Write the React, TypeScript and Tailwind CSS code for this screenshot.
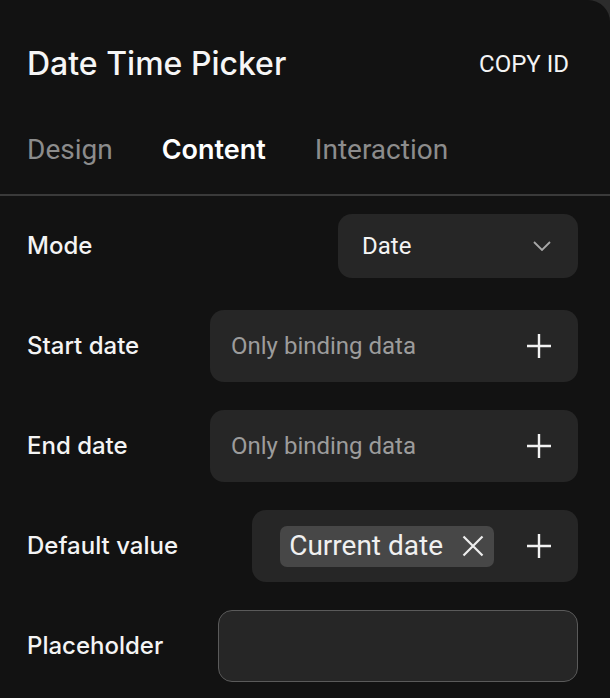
import { ReactNode } from "react";

function Plus() {
  return (
    <svg width="26" height="26" viewBox="0 0 26 26" className="shrink-0">
      <path d="M13 1v24M1 13h24" stroke="#f2f2f2" strokeWidth="2.4" strokeLinecap="butt" />
    </svg>
  );
}

function Cross() {
  return (
    <svg width="22" height="22" viewBox="0 0 22 22" className="shrink-0">
      <path d="M1.5 1.5l19 19M20.5 1.5l-19 19" stroke="#eeeeee" strokeWidth="2.2" />
    </svg>
  );
}

function Chevron() {
  return (
    <svg width="18" height="10" viewBox="0 0 18 10" className="shrink-0">
      <path d="M1 1l8 8 8-8" fill="none" stroke="#a8a8a8" strokeWidth="1.8" />
    </svg>
  );
}

function Row({ label, children }: { label: string; children: ReactNode }) {
  return (
    <div className="flex h-[72px] items-center justify-between">
      <span className="text-[24px] font-medium text-[#f4f4f4]" style={{ fontFamily: "Inter, sans-serif" }}>
        {label}
      </span>
      {children}
    </div>
  );
}

function BindingBox() {
  return (
    <div className="flex h-[72px] w-[368px] items-center justify-between rounded-[14px] bg-[#262626] pl-[21px] pr-[26px]">
      <span className="text-[24px] text-[#9c9c9c]">Only binding data</span>
      <Plus />
    </div>
  );
}

export default function App() {
  const tabs = ["Design", "Content", "Interaction"];
  return (
    <div className="h-[698px] w-[610px] overflow-hidden bg-[#2c2c2c]" style={{ fontFamily: "Roboto, sans-serif" }}>
      <div className="h-full rounded-tr-[22px] bg-[#121212]">
        {/* Header */}
        <div className="flex items-center justify-between pl-[27px] pr-[41px] pt-[44px]">
          <h1 className="text-[32px] font-medium leading-[40px] text-[#f6f6f6]" style={{ fontFamily: "Inter, sans-serif" }}>
            Date Time Picker
          </h1>
          <span className="text-[24px] leading-[40px] text-[#f4f4f4]">COPY ID</span>
        </div>

        {/* Tabs */}
        <div className="mt-[48px] flex gap-[49px] border-b-2 border-[#3a3a3a] pb-[26px] pl-[27px]">
          {tabs.map((t) => (
            <span
              key={t}
              className={
                t === "Content"
                  ? "text-[27px] font-semibold leading-[36px] text-white"
                  : "text-[28px] leading-[36px] text-[#8c8c8c]"
              }
              style={t === "Content" ? { fontFamily: "Inter, sans-serif" } : undefined}
            >
              {t}
            </span>
          ))}
        </div>

        {/* Fields */}
        <div className="flex flex-col gap-[28px] pl-[27px] pr-[32px] pt-[14px]">
          <Row label="Mode">
            <div className="flex h-[64px] w-[240px] items-center justify-between rounded-[14px] bg-[#262626] pl-[24px] pr-[27px]">
              <span className="text-[24px] text-[#f4f4f4]">Date</span>
              <Chevron />
            </div>
          </Row>
          <Row label="Start date">
            <BindingBox />
          </Row>
          <Row label="End date">
            <BindingBox />
          </Row>
          <Row label="Default value">
            <div className="flex h-[72px] items-center gap-[32px] rounded-[14px] bg-[#262626] pl-[28px] pr-[26px]">
              <div className="flex h-[41px] items-center gap-[19px] rounded-[7px] bg-[#474747] pl-[9px] pr-[10px]">
                <span className="text-[28px] text-[#f0f0f0]">Current date</span>
                <Cross />
              </div>
              <Plus />
            </div>
          </Row>
          <Row label="Placeholder">
            <div className="h-[72px] w-[360px] rounded-[14px] border-[1.5px] border-[#5a5a5a] bg-[#262626]" />
          </Row>
        </div>
      </div>
    </div>
  );
}
